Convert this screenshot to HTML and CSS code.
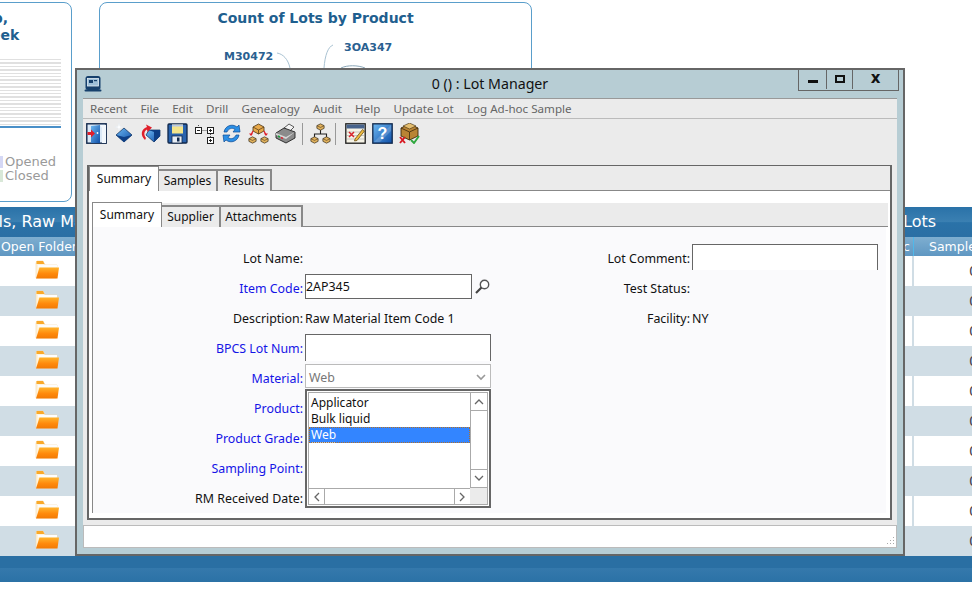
FILE: index.html
```html
<!DOCTYPE html>
<html lang="en">
<head>
  <meta charset="UTF-8">
  <title>Lot Manager</title>
  <link rel="stylesheet" href="styles.css">
</head>
<body>

  <svg class="defs" width="0" height="0">
    <defs>
      <linearGradient id="folderFront" x1="0" y1="0" x2="0" y2="1">
        <stop offset="0" stop-color="#ffb52e"/>
        <stop offset="0.55" stop-color="#ff8a0c"/>
        <stop offset="1" stop-color="#f27a05"/>
      </linearGradient>
      <linearGradient id="blueFace" x1="0" y1="0" x2="1" y2="1">
        <stop offset="0" stop-color="#6db8f2"/>
        <stop offset="1" stop-color="#0f4fa8"/>
      </linearGradient>
      <symbol id="folder" viewBox="0 0 24 20">
        <path d="M1 3 L1 18 L21 18 L22 5 L10 5 L8 1 L2 1 Z" fill="#fff3dc" stroke="#f4d9a8" stroke-width="0.6"/>
        <path d="M1.5 1 H8 L9.5 4 H1.5 Z" fill="#f9a92a"/>
        <path d="M3 5 H22 V7.5 H3 Z" fill="#fdfdfd"/>
        <path d="M4.5 7.5 H24 L22.5 18.5 H1 Z" fill="url(#folderFront)"/>
      </symbol>
      <symbol id="pkg" viewBox="0 0 10 8">
        <path d="M5 0.5 L9 2.5 L9 5.5 L5 7.5 L1 5.5 L1 2.5 Z" fill="#e2b25c" stroke="#3b2f1c" stroke-width="0.8"/>
        <path d="M1 2.5 L5 4.5 L9 2.5" fill="none" stroke="#3b2f1c" stroke-width="0.6"/>
      </symbol>
    </defs>
  </svg>

  <div class="dashboard">
    <div class="top-row">
      <div class="card card-week">
        <h2 class="card-title">Lots Open &amp; Group,<br>Closed This Past Week</h2>
        <div class="stripes"></div>
        <ul class="legend">
          <li><span class="swatch swatch-open"></span>Opened</li>
          <li><span class="swatch swatch-closed"></span>Closed</li>
        </ul>
      </div>
      <div class="card card-product">
        <h2 class="card-title">Count of Lots by Product</h2>
        <svg class="pie" width="431" height="50" viewBox="0 0 431 50">
          <path d="M177 8 C183 9 188 14 190 23" fill="none" stroke="#a9c2d2"/>
          <path d="M233 0 C228 2 225 10 224 23" fill="none" stroke="#a9c2d2"/>
          <path d="M241 23 C247 20 258 20 265 23" fill="none" stroke="#8aa6b8"/>
          <text x="124" y="15" class="pie-label">M30472</text>
          <text x="244" y="6" class="pie-label">3OA347</text>
        </svg>
      </div>
    </div>

    <div class="grid-title">
      <span class="grid-title-left">Materials, Raw Materials</span>
      <span class="grid-title-right">Lots</span>
    </div>
    <div class="grid-head">
      <div class="head-cell head-folder">Open Folder</div>
      <div class="head-cell head-spec">Spec</div>
      <div class="head-cell head-sample">Samples</div>
    </div>
    <div class="grid-row"><div class="cell-folder"><svg width="24" height="20"><use href="#folder"/></svg></div><div class="cell-mid"></div><div class="cell-count">0</div></div>
    <div class="grid-row"><div class="cell-folder"><svg width="24" height="20"><use href="#folder"/></svg></div><div class="cell-mid"></div><div class="cell-count">0</div></div>
    <div class="grid-row"><div class="cell-folder"><svg width="24" height="20"><use href="#folder"/></svg></div><div class="cell-mid"></div><div class="cell-count">0</div></div>
    <div class="grid-row"><div class="cell-folder"><svg width="24" height="20"><use href="#folder"/></svg></div><div class="cell-mid"></div><div class="cell-count">0</div></div>
    <div class="grid-row"><div class="cell-folder"><svg width="24" height="20"><use href="#folder"/></svg></div><div class="cell-mid"></div><div class="cell-count">0</div></div>
    <div class="grid-row"><div class="cell-folder"><svg width="24" height="20"><use href="#folder"/></svg></div><div class="cell-mid"></div><div class="cell-count">0</div></div>
    <div class="grid-row"><div class="cell-folder"><svg width="24" height="20"><use href="#folder"/></svg></div><div class="cell-mid"></div><div class="cell-count">0</div></div>
    <div class="grid-row"><div class="cell-folder"><svg width="24" height="20"><use href="#folder"/></svg></div><div class="cell-mid"></div><div class="cell-count">0</div></div>
    <div class="grid-row"><div class="cell-folder"><svg width="24" height="20"><use href="#folder"/></svg></div><div class="cell-mid"></div><div class="cell-count">0</div></div>
    <div class="grid-row"><div class="cell-folder"><svg width="24" height="20"><use href="#folder"/></svg></div><div class="cell-mid"></div><div class="cell-count">0</div></div>
    <div class="grid-footer"></div>
  </div>

  <div class="window">
    <div class="titlebar">
      <svg class="app-icon" width="18" height="18" viewBox="0 0 18 18">
        <rect x="1.5" y="1" width="15" height="14" rx="2.5" fill="#16406c"/>
        <rect x="3.5" y="3.5" width="11" height="7.5" fill="#9dbfd8" stroke="#e4eef5" stroke-width="0.8"/>
        <rect x="5" y="5" width="4" height="3" fill="#16406c"/>
        <rect x="10" y="5" width="3" height="1.2" fill="#16406c"/>
        <rect x="0.5" y="14.5" width="17" height="2" rx="1" fill="#16406c"/>
      </svg>
      <div class="window-title">0 () : Lot Manager</div>
      <div class="window-controls">
        <div class="win-btn btn-min"><span></span></div>
        <div class="win-btn btn-max"><span></span></div>
        <div class="win-btn btn-close">x</div>
      </div>
    </div>

    <div class="win-body">
      <div class="menubar">
        <span>Recent</span><span>File</span><span>Edit</span><span>Drill</span><span>Genealogy</span><span>Audit</span><span>Help</span><span>Update Lot</span><span>Log Ad-hoc Sample</span>
      </div>

      <div class="toolbar">
        <svg width="21" height="21" viewBox="0 0 21 21">
          <rect x="0.8" y="0.8" width="19.4" height="19.4" fill="#dbe9f7" stroke="#10274a" stroke-width="1.4"/>
          <path d="M5 20 V3 L14 2 V20 Z" fill="url(#blueFace)"/>
          <path d="M14 2 H20 V20 H16 V5 Z" fill="#f2f7fc"/>
          <circle cx="11.5" cy="10" r="0.9" fill="#fff"/>
          <path d="M1.5 9 H5 V6.5 L9 10.5 L5 14.5 V12 H1.5 Z" fill="#e01f2b"/>
        </svg>
        <svg width="21" height="21" viewBox="0 0 21 21">
          <path d="M11 5 L19 12 L11 19 L3 12 Z" fill="url(#blueFace)" stroke="#0a2a55" stroke-width="0.7"/>
          <path d="M3 12 L11 19 L19 12 L11 14 Z" fill="#0e3f86"/>
          <path d="M6 0 L6.8 3.4 L10 4 L6.8 4.8 L6 8 L5.2 4.8 L2 4 L5.2 3.4 Z" fill="#fff" stroke="#dfe9f5" stroke-width="0.3"/>
        </svg>
        <svg width="21" height="21" viewBox="0 0 21 21">
          <path d="M9 7 H20 V13 L14 19 L6 12 Z" fill="url(#blueFace)" stroke="#0a2a55" stroke-width="0.7"/>
          <path d="M14 19 V9 L9 7 L20 7 L20 13 Z" fill="#0e3f86"/>
          <path d="M5 17 C0 12 1 6 7 4 L6 1.5 L12 4.5 L7.5 9 L7 6.5 C4 8 3.5 12 6 15 Z" fill="#e01f2b"/>
        </svg>
        <svg width="21" height="21" viewBox="0 0 21 21">
          <rect x="1" y="1" width="19" height="19" rx="1" fill="#2a63ad" stroke="#10274a" stroke-width="1.3"/>
          <rect x="5" y="1.5" width="11" height="9" fill="#f4e58a"/>
          <rect x="5" y="1.5" width="11" height="2" fill="#b7c7e6"/>
          <rect x="5" y="13" width="10" height="7" fill="#e8eef5" stroke="#10274a" stroke-width="0.8"/>
          <rect x="10" y="14.5" width="2.5" height="4" fill="#10274a"/>
        </svg>
        <svg width="21" height="21" viewBox="0 0 21 21">
          <g fill="#fff" stroke="#222" stroke-width="1">
            <rect x="1.5" y="4.5" width="6" height="6"/>
            <rect x="13.5" y="4.5" width="6" height="6"/>
            <rect x="13.5" y="14.5" width="6" height="6"/>
          </g>
          <path d="M3 7.5 H6 M15 7.5 H18 M16.5 6 V9 M15 17.5 H18 M16.5 16 V19" stroke="#222"/>
          <path d="M4.5 2 V4 M8.5 7.5 H13 M16.5 11 V14" stroke="#555" stroke-dasharray="1 1"/>
        </svg>
        <svg width="21" height="21" viewBox="0 0 21 21">
          <path d="M3 9 C4 3 11 0 16 4 L18 2 L19 9 L12 9 L14 6.5 C11 4 7 6 6 9 Z" fill="#2b8fe6" stroke="#0d4b93" stroke-width="0.7"/>
          <path d="M18 12 C17 18 10 21 5 17 L3 19 L2 12 L9 12 L7 14.5 C10 17 14 15 15 12 Z" fill="#2b8fe6" stroke="#0d4b93" stroke-width="0.7"/>
        </svg>
        <svg width="21" height="21" viewBox="0 0 21 21">
          <path d="M10.5 1 L16 4 V8 L10.5 11 L5 8 V4 Z" fill="#e8a94a" stroke="#4a3414" stroke-width="0.8"/>
          <path d="M5 4 L10.5 7 L16 4 M10.5 7 V11" fill="none" stroke="#4a3414" stroke-width="0.7"/>
          <use href="#pkg" x="0" y="13" width="9" height="8"/>
          <use href="#pkg" x="12" y="13" width="9" height="8"/>
          <path d="M5 8 L3 12 M16 8 L18 12" stroke="#e01f2b" stroke-width="1.3"/>
          <path d="M1 10.5 L3 13 L5 10.5 Z M16 10.5 L18 13 L20 10.5 Z" fill="#e01f2b"/>
        </svg>
        <svg width="21" height="21" viewBox="0 0 21 21">
          <path d="M9 5 L14 1 L19 4 L14 9 Z" fill="#f3f3f3" stroke="#333" stroke-width="0.8"/>
          <path d="M1 10 L9 5 L20 9 L20 15 L11 20 L1 15 Z" fill="#8b8b8b" stroke="#222" stroke-width="0.9"/>
          <path d="M1 10 L11 14 L20 9 L11 16 L1 12 Z" fill="#d6d6d6"/>
          <path d="M3 13 L5 14" stroke="#18a23c" stroke-width="1.4"/>
          <path d="M6 14.5 L8 15.3" stroke="#e01f2b" stroke-width="1.4"/>
        </svg>
        <div class="tool-sep"></div>
        <svg class="tool-tree" width="21" height="21" viewBox="0 0 21 21">
          <path d="M10.5 7 V11 M4.5 15 V11 H16.5 V15" fill="none" stroke="#222" stroke-width="1.1"/>
          <use href="#pkg" x="6" y="0" width="9" height="8"/>
          <use href="#pkg" x="0" y="13" width="9" height="8"/>
          <use href="#pkg" x="12" y="13" width="9" height="8"/>
        </svg>
        <div class="tool-sep"></div>
        <svg class="tool-chart" width="21" height="21" viewBox="0 0 21 21">
          <rect x="0.8" y="0.8" width="19.4" height="19.4" fill="#f6f3e6" stroke="#1a1a1a" stroke-width="1.3"/>
          <rect x="1.5" y="1.5" width="18" height="4" fill="#47638c"/>
          <path d="M2 9 H19 M2 12.5 H19 M2 16 H19" stroke="#b9b9b9" stroke-width="0.8"/>
          <path d="M4 9 L9 14 M9 9 L4 14" stroke="#d8232c" stroke-width="1.5"/>
          <path d="M10 16 L17.5 6.5 L19.5 8 L12 17.5 L9.5 18 Z" fill="#eebb3f" stroke="#5a3f0c" stroke-width="0.7"/>
        </svg>
        <svg width="21" height="21" viewBox="0 0 21 21">
          <rect x="0.8" y="0.8" width="19.4" height="19.4" fill="url(#blueFace)" stroke="#10274a" stroke-width="1.3"/>
          <path d="M2 19 L19 2 V8 L8 19 Z" fill="#fff" opacity="0.18"/>
          <text x="10.5" y="16" class="help-mark">?</text>
        </svg>
        <svg width="21" height="21" viewBox="0 0 21 21">
          <path d="M10.5 1 L19 5 V13 L10.5 17 L2 13 V5 Z" fill="#b98434" stroke="#3d2a0d" stroke-width="0.9"/>
          <path d="M2 5 L10.5 9 L19 5 M10.5 9 V17" fill="none" stroke="#3d2a0d" stroke-width="0.8"/>
          <path d="M4 3 L10.5 0 L17 3 L10.5 6 Z" fill="#e3bd6f" stroke="#3d2a0d" stroke-width="0.6"/>
          <path d="M1 14 L6 20 M6 14 L1 20" stroke="#d8161f" stroke-width="1.9"/>
          <path d="M12 17 L15 20 L20 13" fill="none" stroke="#2fa83e" stroke-width="1.9"/>
        </svg>
      </div>

      <div class="tabs-outer">
        <div class="tab-strip outer-strip">
          <div class="tab active">Summary</div>
          <div class="tab">Samples</div>
          <div class="tab">Results</div>
        </div>
        <div class="tab-page">
          <div class="tab-strip inner-strip">
            <div class="tab active">Summary</div>
            <div class="tab">Supplier</div>
            <div class="tab">Attachments</div>
          </div>
          <div class="form-page">
            <div class="form-grid">
              <label class="lbl">Lot Name:</label>
              <div></div>
              <label class="lbl">Lot Comment:</label>
              <div class="input input-comment"></div>

              <label class="lbl link">Item Code:</label>
              <div class="field-item">
                <div class="input input-code">2AP345</div>
                <svg class="search-icon" width="17" height="17" viewBox="0 0 17 17">
                  <circle cx="10.5" cy="6.5" r="4.2" fill="#fff" stroke="#555" stroke-width="1.4"/>
                  <path d="M7.5 9.5 L2 15" stroke="#444" stroke-width="2.2"/>
                </svg>
              </div>
              <label class="lbl">Test Status:</label>
              <div></div>

              <label class="lbl">Description:</label>
              <div class="value">Raw Material Item Code 1</div>
              <label class="lbl">Facility:</label>
              <div class="value">NY</div>

              <label class="lbl link">BPCS Lot Num:</label>
              <div class="input input-lot"></div>
              <div></div><div></div>

              <label class="lbl link">Material:</label>
              <div class="select">
                <span>Web</span>
                <svg width="10" height="7" viewBox="0 0 10 7"><path d="M1 1 L5 5 L9 1" fill="none" stroke="#999" stroke-width="1.6"/></svg>
              </div>
              <div></div><div></div>

              <label class="lbl link">Product:</label>
              <div></div><div></div><div></div>
              <label class="lbl link">Product Grade:</label>
              <div></div><div></div><div></div>
              <label class="lbl link">Sampling Point:</label>
              <div></div><div></div><div></div>
              <label class="lbl">RM Received Date:</label>
              <div></div><div></div><div></div>
            </div>

            <div class="dropdown">
              <div class="drop-inner">
                <div class="drop-list">
                  <div class="drop-item">Applicator</div>
                  <div class="drop-item">Bulk liquid</div>
                  <div class="drop-item selected"><span>Web</span></div>
                </div>
                <div class="vscroll">
                  <div class="sb-btn"><svg width="10" height="7" viewBox="0 0 10 7"><path d="M1 6 L5 2 L9 6" fill="none" stroke="#666" stroke-width="1.3"/></svg></div>
                  <div class="sb-btn"><svg width="10" height="7" viewBox="0 0 10 7"><path d="M1 1 L5 5 L9 1" fill="none" stroke="#666" stroke-width="1.3"/></svg></div>
                </div>
                <div class="hscroll">
                  <div class="sb-btn"><svg width="7" height="10" viewBox="0 0 7 10"><path d="M6 1 L2 5 L6 9" fill="none" stroke="#666" stroke-width="1.3"/></svg></div>
                  <div class="sb-btn"><svg width="7" height="10" viewBox="0 0 7 10"><path d="M1 1 L5 5 L1 9" fill="none" stroke="#666" stroke-width="1.3"/></svg></div>
                </div>
                <div class="sb-corner"></div>
              </div>
            </div>
          </div>
        </div>
      </div>

      <div class="statusbar">
        <svg class="grip" width="10" height="10" viewBox="0 0 10 10">
          <path d="M8 1h1v1H8z M5 4h1v1H5z M8 4h1v1H8z M2 7h1v1H2z M5 7h1v1H5z M8 7h1v1H8z" fill="#aaa"/>
        </svg>
      </div>
    </div>
  </div>

</body>
</html>
```

FILE: styles.css
```css
html, body {
  margin: 0;
  padding: 0;
  height: 589px;
  overflow: hidden;
  background-color: #fff;
}
body {
  position: relative;
  font-family: "Noto Sans", sans-serif;
}
.defs {
  position: absolute;
}

/* page behind the window */
.dashboard {
  width: 972px;
  padding-top: 2px;
  overflow: hidden;
  font-family: "DejaVu Sans", sans-serif;
}
.top-row {
  display: flex;
  gap: 27px;
  height: 205px;
  margin-left: -211px;
}
.card {
  border: 1px solid #5a9ecb;
  border-radius: 8px;
  box-sizing: border-box;
  background-color: #fff;
}
.card-week {
  flex: none;
  width: 283px;
  height: 200px;
  padding: 0 10px;
}
.card-product {
  flex: none;
  width: 433px;
  height: 200px;
}
.card-title {
  margin: 7px 0 0;
  font-size: 14px;
  line-height: 17px;
  text-align: center;
  color: #1f5f8f;
}
.stripes {
  height: 67px;
  margin-top: 15px;
  border-bottom: 2px solid #4a90c8;
  background: repeating-linear-gradient(to bottom, #e0e0e0 0, #e0e0e0 1.4px, #fff 1.4px, #fff 3.4px);
}
.legend {
  list-style: none;
  margin: 27px 0 0;
  padding: 0 0 0 195px;
  font-size: 13px;
  line-height: 14px;
  color: #9a9a9a;
}
.legend li {
  display: flex;
  align-items: center;
  gap: 2px;
}
.swatch {
  width: 8px;
  height: 12px;
}
.swatch-open {
  background-color: #d5d8f5;
}
.swatch-closed {
  background-color: #d9e8d8;
}
.pie {
  display: block;
  margin-top: 18px;
  overflow: visible;
}
.pie-label {
  font-family: "DejaVu Sans", sans-serif;
  font-size: 11px;
  font-weight: bold;
  fill: #2a6090;
}

.grid-title {
  display: flex;
  justify-content: space-between;
  height: 30px;
  line-height: 30px;
  font-size: 16px;
  color: #fff;
  background: linear-gradient(to bottom, #2a72a8 0, #3b80b2 50%, #2a72a8 52%, #2a6fa4 100%);
  white-space: nowrap;
}
.grid-title-left {
  margin-left: -62px;
}
.grid-title-right {
  width: 69px;
}
.grid-head {
  display: grid;
  grid-template-columns: 100px 814px 58px;
  height: 19px;
  background: linear-gradient(to bottom, #7eaed0, #5f97c2);
  color: #fff;
  font-size: 12.5px;
  line-height: 19px;
  white-space: nowrap;
}
.head-cell {
  overflow: hidden;
  border-right: 1px solid #4fb8ea;
}
.head-folder {
  padding-left: 1px;
}
.head-spec {
  text-align: right;
  padding-right: 3px;
}
.head-sample {
  padding-left: 15px;
  border-right: none;
}
.grid-row {
  display: grid;
  grid-template-columns: 100px 814px 58px;
  height: 30px;
  background-color: #fff;
}
.grid-row:nth-child(odd) {
  background-color: #d0dde5;
}
.cell-folder {
  display: flex;
  align-items: center;
  padding-left: 35px;
}
.cell-folder svg {
  margin-bottom: 2px;
}
.cell-mid {
  border-right: 2px solid #d0dde5;
}
.cell-count {
  padding-left: 55px;
  font-size: 14px;
  line-height: 30px;
  color: #445;
  overflow: hidden;
}
.grid-footer {
  height: 26px;
  background: linear-gradient(to bottom, #2a6fa3 0, #2a6fa3 12px, #3579ac 12px, #2b72a6 26px);
}

/* Lot Manager window */
.window {
  position: absolute;
  left: 75px;
  top: 68px;
  width: 830px;
  height: 488px;
  box-sizing: border-box;
  border: 2px solid #666;
  background-color: #b7cdd4;
  color: #111;
  font-size: 12px;
}
.titlebar {
  display: flex;
  align-items: flex-start;
  height: 28px;
  position: relative;
}
.app-icon {
  margin: 5px 0 0 7px;
}
.window-title {
  position: absolute;
  left: 0;
  right: 0;
  top: 4px;
  text-align: center;
  font-size: 14.2px;
  line-height: 20px;
  color: #111;
}
.window-controls {
  position: absolute;
  top: -1px;
  left: 721px;
  display: flex;
  height: 21px;
  border: 1px solid #666;
  border-top: none;
  z-index: 1;
}
.win-btn {
  display: flex;
  align-items: center;
  justify-content: center;
  height: 20px;
  border-right: 1px solid #666;
}
.win-btn:last-child {
  border-right: none;
}
.btn-min {
  width: 27px;
}
.btn-min span {
  width: 10px;
  height: 3px;
  margin-top: 5px;
  background-color: #111;
}
.btn-max {
  width: 25px;
}
.btn-max span {
  width: 6px;
  height: 4px;
  border: 2px solid #111;
}
.btn-close {
  width: 45px;
  font-size: 15px;
  font-weight: bold;
  font-family: "DejaVu Sans", sans-serif;
  line-height: 16px;
  padding-bottom: 2px;
  box-sizing: border-box;
  height: 20px;
}
.win-body {
  width: 814px;
  margin-left: 6px;
  background-color: #ebebeb;
  height: 450px;
}
.menubar {
  display: flex;
  gap: 13.2px;
  height: 21px;
  padding-left: 7px;
  align-items: center;
  font-size: 11.6px;
  color: #666;
  border-top: 1px solid #999;
  border-bottom: 1px solid #bbb;
  box-sizing: border-box;
  background-color: #ebebeb;
}
.toolbar {
  display: flex;
  align-items: center;
  gap: 6px;
  height: 29px;
  padding-left: 3px;
  box-sizing: border-box;
}
.tool-sep {
  width: 1px;
  height: 22px;
  background-color: #999;
}
.tool-tree {
  margin-left: 1px;
  margin-right: -2px;
}
.tool-chart {
  margin-left: 3px;
}
.help-mark {
  font-family: "Liberation Sans", sans-serif;
  font-size: 16px;
  font-weight: bold;
  fill: #fff;
  text-anchor: middle;
}
.tabs-outer {
  width: 805px;
  height: 355px;
  margin: 17px 0 0 4px;
  border: 2px solid #666;
  border-top: 1px solid #666;
  box-sizing: border-box;
  background-color: #fff;
}
.tab-strip {
  display: flex;
  align-items: flex-end;
  background-color: #ebebeb;
  box-sizing: border-box;
  border-bottom: 1px solid #888;
}
.outer-strip {
  height: 25px;
}
.inner-strip {
  height: 24px;
}
.tab {
  border: 2px solid #888;
  border-bottom: none;
  border-left-width: 0;
  box-sizing: border-box;
  background-color: #ebebeb;
  text-align: center;
  height: 22px;
  line-height: 20px;
  margin-bottom: -1px;
}
.tab:first-child {
  border-left-width: 2px;
}
.tab.active {
  background-color: #fff;
  height: 25px;
  line-height: 23px;
  border-width: 1px 1px 0 1px;
  position: relative;
}
.outer-strip .tab {
  width: 54px;
}
.outer-strip .tab:nth-child(2) {
  width: 59px;
}
.outer-strip .tab.active {
  width: 70px;
}
.inner-strip .tab {
  width: 59px;
}
.inner-strip .tab:nth-child(3) {
  width: 82px;
}
.inner-strip .tab.active {
  width: 70px;
}
.tab-page {
  padding: 12px 2px 0 3px;
  height: 327px;
  box-sizing: border-box;
  background-color: #fff;
}
.form-page {
  position: relative;
  height: 286px;
  box-sizing: border-box;
  border-left: 1px solid #888;
  background-color: #fafafc;
  padding-top: 16px;
  margin-right: 2px;
  font-size: 12.4px;
}
.form-grid {
  display: grid;
  grid-template-columns: 210px 186px 197px 186px;
  column-gap: 2px;
  grid-auto-rows: 30px;
  align-items: center;
}
.form-grid > :nth-child(4n+3) {
  margin-left: -2px;
}
.lbl {
  text-align: right;
  white-space: nowrap;
  color: #111;
}
.link {
  color: #1414e6;
}
.input {
  box-sizing: border-box;
  background-color: #fff;
  border: 1px solid #666;
}
.input-comment {
  height: 26px;
  margin-bottom: 2px;
  border-bottom: none;
}
.input-lot {
  height: 27px;
  margin-bottom: 2px;
  border-bottom: none;
}
.field-item {
  display: flex;
  align-items: center;
  gap: 2px;
}
.input-code {
  width: 167px;
  height: 25px;
  margin-bottom: 4px;
  line-height: 24px;
}
.search-icon {
  flex: none;
  margin-bottom: 4px;
}
.select {
  display: flex;
  justify-content: space-between;
  align-items: center;
  height: 24px;
  margin-bottom: 4px;
  padding: 2px 4px 0 3px;
  box-sizing: border-box;
  border: 1px solid #bbb;
  background-color: #fff;
  color: #777;
}
.dropdown {
  position: absolute;
  left: 212px;
  top: 162px;
  width: 186px;
  height: 119px;
  box-sizing: border-box;
  border: 2px solid #666;
  background-color: #fff;
  padding: 1px;
  font-size: 12px;
}
.drop-inner {
  display: grid;
  grid-template-columns: 161px 17px;
  grid-template-rows: 95px 16px;
  width: 180px;
  height: 113px;
  box-sizing: border-box;
  border: 1px solid #aaa;
  background-color: #fff;
}
.drop-list {
  padding-top: 2px;
}
.drop-item {
  height: 16px;
  line-height: 16px;
  padding-left: 2px;
  color: #111;
}
.drop-item.selected {
  background-color: #3385ff;
  color: #fff;
  outline: 1px dotted #b0702a;
  outline-offset: -1px;
}
.drop-item.selected span {
  display: inline-block;
  height: 15px;
  border-bottom: 1px solid #a8c4e8;
}
.vscroll {
  display: flex;
  flex-direction: column;
  justify-content: space-between;
  border: 1px solid #aaa;
  border-width: 0 0 1px 1px;
}
.hscroll {
  display: flex;
  justify-content: space-between;
  border-top: 1px solid #aaa;
}
.sb-btn {
  display: flex;
  align-items: center;
  justify-content: center;
  box-sizing: border-box;
}
.vscroll .sb-btn {
  height: 18px;
}
.vscroll .sb-btn:first-child {
  border-bottom: 1px solid #aaa;
}
.vscroll .sb-btn:last-child {
  border-top: 1px solid #aaa;
}
.hscroll .sb-btn {
  width: 16px;
}
.hscroll .sb-btn:first-child {
  border-right: 1px solid #aaa;
}
.hscroll .sb-btn:last-child {
  border-left: 1px solid #aaa;
}
.sb-corner {
  background-color: #ebebeb;
}
.statusbar {
  position: relative;
  height: 23px;
  margin-top: 5px;
  box-sizing: border-box;
  border: 1px solid #bbb;
  background-color: #fff;
}
.grip {
  position: absolute;
  right: 1px;
  bottom: 1px;
}
```
